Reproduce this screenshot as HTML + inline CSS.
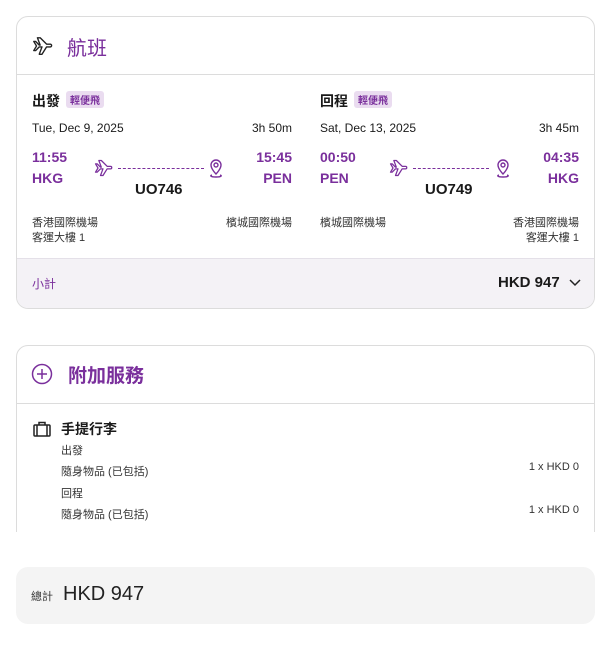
<!DOCTYPE html>
<html><head><meta charset="utf-8"><style>
*{margin:0;padding:0;box-sizing:border-box}
body{width:600px;height:647px;background:#fff;font-family:"Liberation Sans","Noto Sans CJK TC",sans-serif;color:#1a1a1a;position:relative;overflow:hidden}
.abs{position:absolute}
.card{position:absolute;left:16px;width:579px;border:1px solid #dcdcdc;border-radius:12px;background:#fff;overflow:hidden}
.p{color:#7a2f9c}
.b{font-weight:bold}
.tag{display:inline-block;background:#eadcf0;color:#7a2f9c;font-size:10px;padding:1px 4px;border-radius:3px;vertical-align:2px;margin-left:6px;font-weight:bold}
.s12{font-size:12px}
.s11{font-size:11px;color:#333}
.r{text-align:right}
</style></head><body>
<div class="card" style="top:16px;height:293px">
  <svg class="abs" style="left:14px;top:18px" width="22" height="22" viewBox="0 0 24 24" fill="none" stroke="#222" stroke-width="1.5" stroke-linejoin="round"><path d="M3 7l3 5-3 5h2l4-4h3l-3 8h3l5-8h4a1.5 1.5 0 0 0 0-3h-4L10 3H7l3 8H9L5 7z"/></svg>
  <div class="abs p" style="left:50px;top:15px;font-size:20px">航班</div>
  <div class="abs" style="left:0;top:57px;width:100%;border-top:1px solid #dcdcdc"></div>

  <div class="abs b" style="left:15px;top:74px;font-size:14px">出發<span class="tag">輕便飛</span></div>
  <div class="abs s12" style="left:15px;top:104px">Tue, Dec 9, 2025</div>
  <div class="abs s12 r" style="right:302px;top:104px">3h 50m</div>
  <div class="abs p b" style="left:15px;top:132px;font-size:14px">11:55</div>
  <div class="abs p b" style="left:15px;top:153px;font-size:14px">HKG</div>
  <div class="abs p b r" style="right:302px;top:132px;font-size:14px">15:45</div>
  <div class="abs p b r" style="right:302px;top:153px;font-size:14px">PEN</div>
  <svg class="abs" style="left:76px;top:141px" width="20" height="20" viewBox="0 0 24 24" fill="none" stroke="#7a2f9c" stroke-width="1.5" stroke-linejoin="round"><path d="M3 7l3 5-3 5h2l4-4h3l-3 8h3l5-8h4a1.5 1.5 0 0 0 0-3h-4L10 3H7l3 8H9L5 7z"/></svg>
  <div class="abs" style="left:101px;top:151px;width:86px;border-top:1.5px dashed #7a2f9c"></div>
  <svg class="abs" style="left:190px;top:141px" width="18" height="22" viewBox="0 0 18 22" fill="none" stroke="#7a2f9c" stroke-width="1.4"><path d="M9 16s-5-5-5-9a5 5 0 0 1 10 0c0 4-5 9-5 9z"/><circle cx="9" cy="7" r="2"/><path d="M5 17c-2 .5-2 2 4 2s6-1.5 4-2"/></svg>
  <div class="abs b" style="left:118px;top:164px;font-size:15px">UO746</div>
  <div class="abs s11" style="left:15px;top:197px">香港國際機場</div>
  <div class="abs s11" style="left:15px;top:212px">客運大樓 1</div>
  <div class="abs s11 r" style="right:302px;top:197px">檳城國際機場</div>

  <div class="abs b" style="left:303px;top:74px;font-size:14px">回程<span class="tag">輕便飛</span></div>
  <div class="abs s12" style="left:303px;top:104px">Sat, Dec 13, 2025</div>
  <div class="abs s12 r" style="right:15px;top:104px">3h 45m</div>
  <div class="abs p b" style="left:303px;top:132px;font-size:14px">00:50</div>
  <div class="abs p b" style="left:303px;top:153px;font-size:14px">PEN</div>
  <div class="abs p b r" style="right:15px;top:132px;font-size:14px">04:35</div>
  <div class="abs p b r" style="right:15px;top:153px;font-size:14px">HKG</div>
  <svg class="abs" style="left:371px;top:141px" width="20" height="20" viewBox="0 0 24 24" fill="none" stroke="#7a2f9c" stroke-width="1.5" stroke-linejoin="round"><path d="M3 7l3 5-3 5h2l4-4h3l-3 8h3l5-8h4a1.5 1.5 0 0 0 0-3h-4L10 3H7l3 8H9L5 7z"/></svg>
  <div class="abs" style="left:396px;top:151px;width:76px;border-top:1.5px dashed #7a2f9c"></div>
  <svg class="abs" style="left:477px;top:141px" width="18" height="22" viewBox="0 0 18 22" fill="none" stroke="#7a2f9c" stroke-width="1.4"><path d="M9 16s-5-5-5-9a5 5 0 0 1 10 0c0 4-5 9-5 9z"/><circle cx="9" cy="7" r="2"/><path d="M5 17c-2 .5-2 2 4 2s6-1.5 4-2"/></svg>
  <div class="abs b" style="left:408px;top:164px;font-size:15px">UO749</div>
  <div class="abs s11" style="left:303px;top:197px">檳城國際機場</div>
  <div class="abs s11 r" style="right:15px;top:197px">香港國際機場</div>
  <div class="abs s11 r" style="right:15px;top:212px">客運大樓 1</div>

  <div class="abs" style="left:0;top:241px;width:100%;height:52px;background:#f4f2f6;border-top:1px solid #e4e0e8"></div>
  <div class="abs p s12" style="left:15px;top:258px">小計</div>
  <div class="abs b" style="left:481px;top:257px;font-size:15px">HKD 947</div>
  <svg class="abs" style="left:551px;top:261px" width="14" height="10" viewBox="0 0 14 10" fill="none" stroke="#222" stroke-width="1.5"><path d="M2 2l5 5 5-5"/></svg>
</div>

<div class="card" style="top:345px;height:200px">
  <svg class="abs" style="left:14px;top:17px" width="22" height="22" viewBox="0 0 22 22" fill="none" stroke="#7a2f9c" stroke-width="1.5"><circle cx="11" cy="11" r="9.5"/><path d="M11 6v10M6 11h10"/></svg>
  <div class="abs p b" style="left:51px;top:15px;font-size:19px">附加服務</div>
  <div class="abs" style="left:0;top:57px;width:100%;border-top:1px solid #dcdcdc"></div>
  <svg class="abs" style="left:16px;top:75px" width="18" height="16" viewBox="0 0 18 16" fill="none" stroke="#222" stroke-width="1.5"><rect x="1" y="4" width="16" height="11" rx="1"/><path d="M6 4V1.5h6V4M4 4v11M14 4v11"/></svg>
  <div class="abs b" style="left:44px;top:73px;font-size:14px">手提行李</div>
  <div class="abs s11" style="left:44px;top:96px">出發</div>
  <div class="abs s11" style="left:44px;top:117px">隨身物品 (已包括)</div>
  <div class="abs s11 r" style="right:15px;top:115px">1 x HKD 0</div>
  <div class="abs s11" style="left:44px;top:139px">回程</div>
  <div class="abs s11" style="left:44px;top:160px">隨身物品 (已包括)</div>
  <div class="abs s11 r" style="right:15px;top:158px">1 x HKD 0</div>
</div>
<div class="abs" style="left:0;top:532px;width:600px;height:30px;background:#fff"></div>

<div class="abs" style="left:16px;top:567px;width:579px;height:57px;background:#f4f4f4;border-radius:12px"></div>
<div class="abs s11" style="left:31px;top:588px">總計</div>
<div class="abs" style="left:63px;top:583px;font-size:20px;color:#222">HKD 947</div>
</body></html>
